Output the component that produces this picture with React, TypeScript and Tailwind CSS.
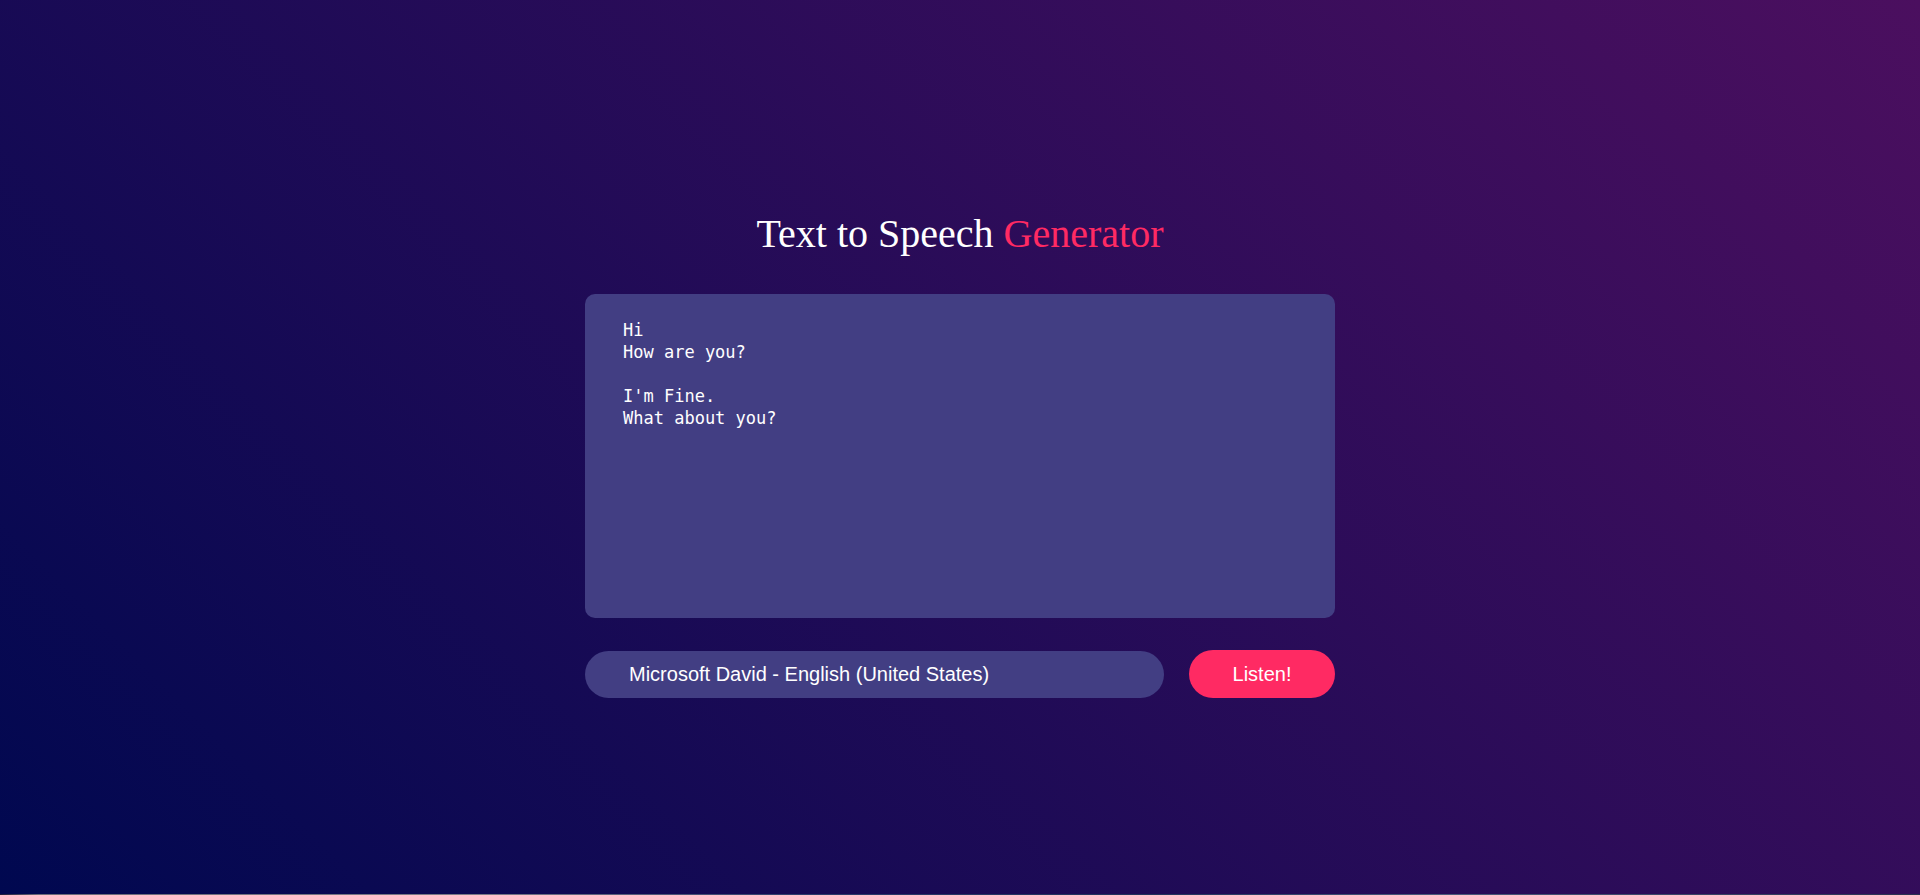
import React from "react";

export default function App() {
  return (
    <div className="w-[1920px] h-[895px] overflow-hidden flex flex-col">
      <main className="h-[894px] w-full bg-[linear-gradient(45deg,#000850,#4b0f5f)] flex flex-col items-center pt-[211px]">
        <h1 className="text-[40px] leading-[46px] text-white font-normal" style={{ fontFamily: '"Liberation Serif", "Times New Roman", serif' }}>
          Text to Speech <span className="text-[#ff2a63]">Generator</span>
        </h1>
        <textarea
          defaultValue={"Hi\nHow are you?\n\nI'm Fine.\nWhat about you?"}
          className="mt-[37px] w-[750px] h-[324px] rounded-[10px] bg-[#423e83] text-white text-[17px] leading-[22px] pt-[25px] px-[38px] resize-none outline-none border-0"
          style={{ fontFamily: '"DejaVu Sans Mono", "Liberation Mono", monospace' }}
        />
        <div className="mt-[32px] w-[750px] flex items-center gap-[25px]" style={{ fontFamily: '"Liberation Sans", Arial, sans-serif' }}>
          <div className="w-[579px] h-[47px] rounded-full bg-[#423e83] text-white text-[20px] flex items-center pl-[44px]">
            Microsoft David - English (United States)
          </div>
          <button className="w-[146px] h-[48px] rounded-full bg-[#ff2a63] text-white text-[20px] flex items-center justify-center">
            Listen!
          </button>
        </div>
      </main>
      <div className="h-[1px] w-full bg-[linear-gradient(90deg,#1a1a3a_0%,#6b6b78_2%,#7a7a86_25%,#2a3a6a_42%,#20305a_60%,#4a5a7a_75%,#2a3050_100%)]" />
    </div>
  );
}
